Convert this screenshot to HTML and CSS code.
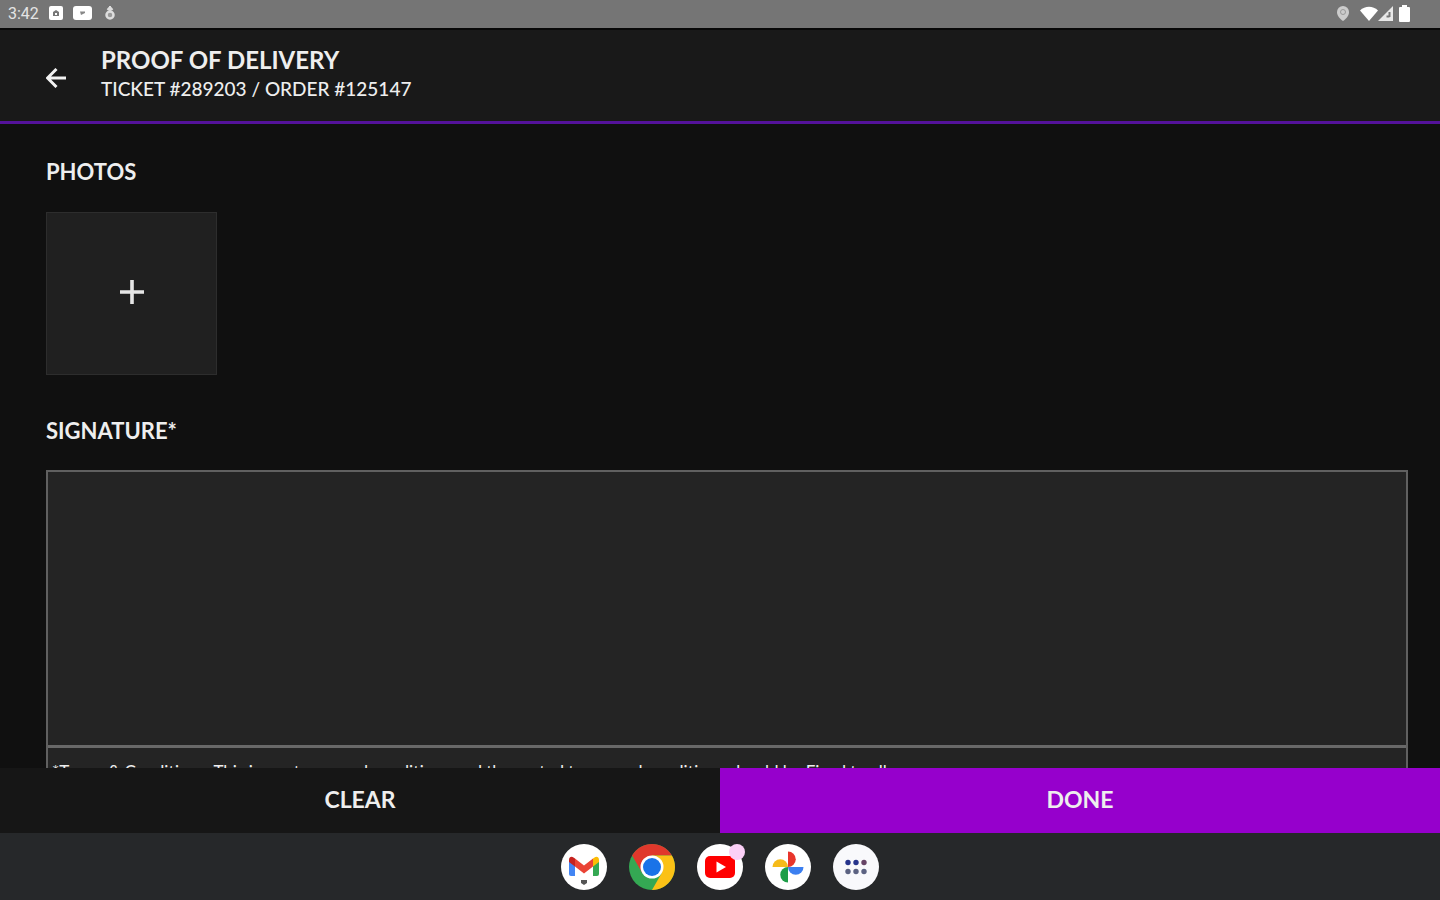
FILE: index.html
```
<!DOCTYPE html>
<html lang="en">
<head>
  <meta charset="UTF-8" />
  <meta name="viewport" content="width=device-width, initial-scale=1" />
  <title>Proof of Delivery</title>
  <link rel="stylesheet" href="styles.css">
</head>
<body>

<div class="status-bar">
  <div class="status-left">
    <span class="time">3:42</span>
    <svg width="14" height="14" viewBox="0 0 14 14"><rect width="14" height="14" rx="2" fill="#fff"/><path d="M4 10V6l3-2 3 2v4z" fill="#777"/><path d="M6 7h2v2H6z" fill="#fff"/></svg>
    <svg class="video" width="19" height="14" viewBox="0 0 19 14"><rect width="19" height="14" rx="3" fill="#fff"/><path d="M7 5.500h5v1.500l-4 2z" fill="#888"/></svg>
    <svg width="12" height="14" viewBox="0 0 12 14"><path d="M6 0v5M3.500 4L6 1l2.500 3" fill="none" stroke="#ddd" stroke-width="2"/><circle cx="6" cy="9" r="3.500" fill="#999" stroke="#ddd" stroke-width="2.500"/></svg>
  </div>
  <div class="status-right">
    <svg class="pin" width="12" height="15" viewBox="0 0 12 15"><path d="M6 0a6 6 0 0 0-6 6c0 4 3 7 6 9 3-2 6-5 6-9a6 6 0 0 0-6-6z" fill="#ccc"/><circle cx="6" cy="6" r="2.500" fill="none" stroke="#999"/></svg>
    <svg width="18" height="15" viewBox="0 0 18 15"><path d="M0 4.500C5-.5 13-.5 18 4.500L9 15z" fill="#fff"/></svg>
    <svg width="15" height="15" viewBox="0 0 15 15"><path d="M15 0v15H0z" fill="#e8e8e8"/><path d="M11.500 6v5M8.500 10.500h3" stroke="#777" stroke-width="2"/></svg>
    <svg class="battery" width="11" height="17" viewBox="0 0 11 17"><path d="M3 0h5v2h2a1 1 0 0 1 1 1v13a1 1 0 0 1-1 1H1a1 1 0 0 1-1-1V3a1 1 0 0 1 1-1h2z" fill="#fff"/></svg>
  </div>
</div>

<header class="header">
  <button class="back" aria-label="Back">
    <svg width="20" height="20" viewBox="0 0 20 20"><path d="M20 10H2M10.500 1L1.500 10l9 9" fill="none" stroke="#f2f2f2" stroke-width="3"/></svg>
  </button>
  <div>
    <h1>PROOF OF DELIVERY</h1>
    <p class="ticket">TICKET #289203 / ORDER #125147</p>
  </div>
</header>

<main class="content">
  <h2>PHOTOS</h2>
  <button class="add-photo" aria-label="Add photo">
    <svg width="24" height="24" viewBox="0 0 24 24"><path d="M12 0v24M0 12h24" stroke="#e6e6e6" stroke-width="3.600"/></svg>
  </button>
  <h2>SIGNATURE*</h2>
  <div class="signature">
    <div class="pad"></div>
    <p class="terms">*Terms &amp; Conditions: This is our terms and conditions and the rented terms and conditions should be Fixed to all</p>
  </div>
</main>

<div class="actions">
  <button class="clear">CLEAR</button>
  <button class="done">DONE</button>
</div>

<nav class="dock">
  <a href="#" class="app" aria-label="Gmail">
    <svg width="46" height="46" viewBox="0 0 46 46">
      <circle cx="23" cy="23" r="23" fill="#fff"/>
      <path d="M8 16v14q0 2 2 2h4V18z" fill="#4285f4"/>
      <path d="M32 18v14h4q2 0 2-2V16z" fill="#34a853"/>
      <path d="M32 14.500v8l6-4.500v-2c0-3-2.500-4-4.500-2.500z" fill="#fbbc04"/>
      <path d="M14 14.500v8L8 18v-2c0-3 2.500-4 4.500-2.500z" fill="#c5221f"/>
      <path d="M14 14.500l9 7 9-7v8l-9 7-9-7z" fill="#ea4335"/>
      <path d="M20 36h6v3l-3 2-3-2z" fill="#555"/>
    </svg>
  </a>
  <a href="#" class="app" aria-label="Chrome">
    <svg width="46" height="46" viewBox="0 0 46 46">
      <circle cx="23" cy="23" r="23" fill="#34a853"/>
      <path d="M3.100 11.500A23 23 0 0 1 42.900 11.500H23L13 28.500z" fill="#e0382c"/>
      <path d="M42.900 11.500A23 23 0 0 1 23 46l10-17.500-10-17z" fill="#fbc116"/>
      <circle cx="23" cy="23" r="11.500" fill="#fff"/>
      <circle cx="23" cy="23" r="9" fill="#1a73e8"/>
    </svg>
  </a>
  <a href="#" class="app" aria-label="YouTube">
    <svg width="46" height="46" viewBox="0 0 46 46"><circle cx="23" cy="23" r="23" fill="#fff"/><rect x="8" y="12" width="30" height="22" rx="5" fill="#f00"/><path d="M19.500 17.500v11L29 23z" fill="#fff"/></svg>
    <span class="badge"></span>
  </a>
  <a href="#" class="app" aria-label="Photos">
    <svg width="46" height="46" viewBox="0 0 46 46">
      <circle cx="23" cy="23" r="23" fill="#fff"/>
      <path d="M23 23V7.500a7.750 7.750 0 0 1 0 15.500z" fill="#e8352b"/>
      <path d="M23 23h15.500a7.750 7.750 0 0 1-15.500 0z" fill="#3c7ff0"/>
      <path d="M23 23v15.500a7.750 7.750 0 0 1 0-15.500z" fill="#1e9e48"/>
      <path d="M23 23H7.500a7.750 7.750 0 0 1 15.500 0z" fill="#f6bb1a"/>
    </svg>
  </a>
  <a href="#" class="app" aria-label="All apps">
    <svg width="46" height="46" viewBox="0 0 46 46"><circle cx="23" cy="23" r="23" fill="#f9f9fc"/><g fill="#27348c"><circle cx="15" cy="18.500" r="2.700"/><circle cx="23" cy="18.500" r="2.700"/></g><circle cx="31" cy="18.500" r="2.700" fill="#674466"/><g fill="#5c6282"><circle cx="15" cy="27.500" r="2.700"/><circle cx="23" cy="27.500" r="2.700"/><circle cx="31" cy="27.500" r="2.700"/></g></svg>
  </a>
</nav>

</body>
</html>
```
FILE: styles.css
```
* {
  box-sizing: border-box;
}
body {
  margin: 0;
  height: 100vh;
  display: flex;
  flex-direction: column;
  overflow: hidden;
  background: #101010;
  color: #eeeeee;
  font-family: Lato, "Liberation Sans", sans-serif;
}
h1, h2, p {
  margin: 0;
}
button {
  border: none;
  padding: 0;
  color: inherit;
  font-family: inherit;
  cursor: pointer;
}
svg {
  display: block;
}

/* status bar */
.status-bar {
  flex: none;
  height: 28px;
  padding: 0 30px 2px 8px;
  display: flex;
  justify-content: space-between;
  background: #757575;
}
.status-left, .status-right {
  display: flex;
  align-items: center;
}
.time {
  width: 41px;
  font-family: Roboto, sans-serif;
  font-size: 16px;
  color: #e4e4e4;
}
.video {
  margin: 0 12px 0 10px;
}
.pin {
  margin-right: 11px;
}
.battery {
  margin-left: 6px;
}

/* header */
.header {
  flex: none;
  height: 96px;
  padding: 0 46px 3px;
  display: flex;
  align-items: center;
  gap: 35px;
  background: #191919;
  border-top: 2px solid #080808;
  border-bottom: 3px solid #54129a;
}
.back {
  padding-top: 8px;
  background: none;
}
h1 {
  font-size: 24px;
  line-height: 30px;
  font-weight: bold;
}
.ticket {
  font-size: 19px;
  line-height: 28px;
  font-weight: 500;
}

/* photos and signature */
.content {
  flex: 1;
  min-height: 0;
  overflow: hidden;
  padding: 32px 32px 0 46px;
}
h2 {
  font-size: 22px;
  line-height: 32px;
  font-weight: bold;
}
.add-photo {
  width: 171px;
  height: 163px;
  margin: 24px 0 40px;
  padding-bottom: 3px;
  display: flex;
  align-items: center;
  justify-content: center;
  background: #202020;
  border: 1px solid #2d2d2d;
}
.signature {
  margin-top: 23px;
  background: #242424;
  border: 2px solid #606060;
}
.pad {
  height: 276px;
  border-bottom: 3px solid #686868;
}
.terms {
  padding: 12px 4px;
  font-size: 17px;
  line-height: 24px;
  white-space: nowrap;
}

/* bottom buttons */
.actions {
  flex: none;
  display: flex;
}
.actions button {
  flex: 1;
  height: 65px;
  padding-bottom: 3px;
  font-size: 23px;
  font-weight: bold;
}
.clear {
  background: #161616;
}
.done {
  background: #9600cc;
}

/* app dock */
.dock {
  flex: none;
  height: 67px;
  display: flex;
  align-items: center;
  justify-content: center;
  gap: 22px;
  background: #26282a;
}
.app {
  position: relative;
}
.badge {
  position: absolute;
  top: 0;
  right: -2px;
  width: 16px;
  height: 16px;
  border-radius: 50%;
  background: #fbd0f7;
}
```
